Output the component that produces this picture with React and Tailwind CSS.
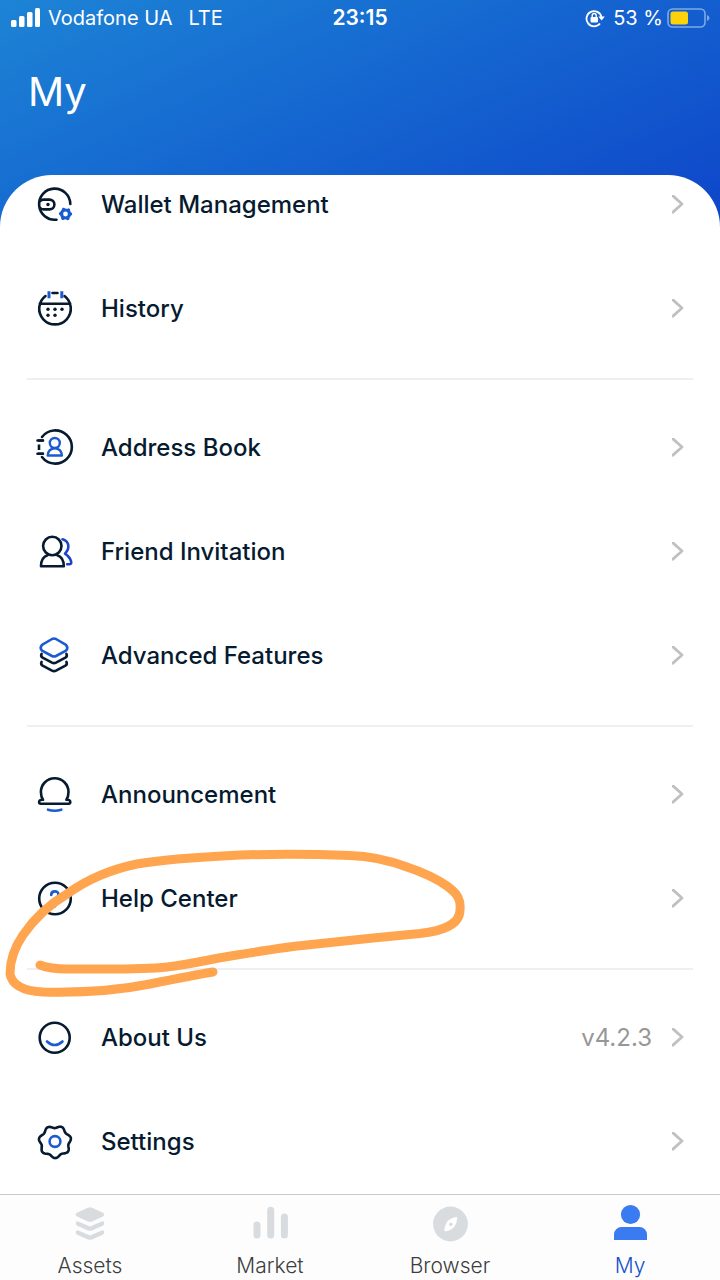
import React from 'react'

const BLUE = '#1b5bd0'
const NAVY = '#061a30'
const GREY = '#d9dcdf'

const Icon = ({ children }) => (
  <svg
    viewBox="0 0 40 40"
    fill="none"
    stroke={NAVY}
    strokeWidth="2.6"
    strokeLinecap="round"
    strokeLinejoin="round"
    aria-hidden="true"
    className="w-10 h-10 shrink-0"
  >
    {children}
  </svg>
)

const WalletIcon = () => (
  <Icon>
    <path d="M35.3 19A15.600 15.600 0 1 0 21.500 34.700" />
    <path d="M5.500 16C6 15 7 14.600 8.500 14.600h6a4.900 4.900 0 0 1 0 9.800h-6C7 24.400 6 24 5.500 23" />
    <circle cx="13" cy="19.500" r="1.700" fill={NAVY} stroke="none" />
    <circle cx="30.500" cy="29" r="4" stroke={BLUE} strokeWidth="3.200" />
    <circle cx="30.500" cy="29" r="5" stroke={BLUE} strokeWidth="3.400" strokeDasharray="0.01 5.226" />
  </Icon>
)

const HistoryIcon = () => (
  <Icon>
    <path d="M10.500 7A15.800 15.800 0 1 0 29.500 7M17.500 4h5M4.800 14.800h30.400" />
    <path d="M14 2.200v7M26.800 2.200v7" stroke={BLUE} strokeWidth="3" strokeLinecap="butt" />
    <g fill={NAVY} stroke="none">
      <circle cx="13" cy="20.300" r="1.700" />
      <circle cx="20" cy="20.300" r="1.700" />
      <circle cx="27" cy="20.300" r="1.700" />
      <circle cx="13" cy="26.300" r="1.700" />
      <circle cx="20" cy="26.300" r="1.700" />
    </g>
  </Icon>
)

const AddressIcon = () => (
  <Icon>
    <path d="M7 9A16.600 16.600 0 1 1 7 29" />
    <path d="M3 12.500h5.500M3 25.800h5.500M4 16.500v5.500" strokeLinecap="butt" />
    <path d="M2.500 12.500h5.500M2.500 25.800h5.500" />
    <g stroke={BLUE} strokeWidth="2.400">
      <circle cx="19.800" cy="15" r="5" />
      <path d="M12.700 27.500c0-4 2.800-7.300 7.100-7.300s7.100 3.300 7.100 7.300z" />
    </g>
  </Icon>
)

const FriendIcon = () => (
  <Icon>
    <circle cx="17.300" cy="14" r="9.200" />
    <path d="M12.500 23.200C8.500 24.500 6 28.500 6 34.300h22.800c0-5.800-2.500-9.800-6.500-11.100" />
    <path
      d="M27.500 7.300c6.500 1.700 8 9 2.500 14.300 4 2.700 5.300 4.700 6.200 8.200.4 2-.8 2.500-4 2.500"
      stroke="#1c43c8"
    />
  </Icon>
)

const FeaturesIcon = () => (
  <Icon>
    <path
      d="M17 3q2-1 4 0l10 5.800q2.600 2.900 0 5.800l-10 5.400q-2 1-4 0L7 14.600q-2.600-2.900 0-5.800z"
      stroke={BLUE}
    />
    <path d="M6.600 17.800q-1.200 2.500 1 3.800l9.400 5q2 1 4 0l9.400-5q2.200-1.300 1-3.800" />
    <path d="M6.600 25.800q-1.200 2.500 1 3.800l9.400 5q2 1 4 0l9.400-5q2.200-1.300 1-3.800" />
  </Icon>
)

const BellIcon = () => (
  <Icon>
    <path d="M8 24.800C6.500 22.500 5.900 20 5.900 17a13.800 13.800 0 0 1 27.600 0c0 3-.6 5.500-2.100 7.800 2.200-.2 3.900.4 3.900 2.200 0 1.200-.8 1.700-1.700 1.700H5.800c-.9 0-1.700-.5-1.700-1.700 0-1.800 1.700-2.400 3.900-2.200z" />
    <path d="M13 34.700q6.700 2 13.300 0" stroke={BLUE} />
  </Icon>
)

const HelpIcon = () => (
  <Icon>
    <circle cx="20" cy="19.500" r="15.800" />
    <path d="M16.200 16c0-4.800 7.200-4.800 7.200-.5 0 3-3.400 3.200-3.400 6.500M20 27v.2" stroke={BLUE} />
  </Icon>
)

const AboutIcon = () => (
  <Icon>
    <circle cx="19.700" cy="19.800" r="15" />
    <path d="M12 23.500q7.700 7 15.500 0" stroke={BLUE} />
  </Icon>
)

// seven-lobed gear outline
const gearPoints = Array.from({ length: 140 }, (_, i) => {
  const a = (i / 140) * Math.PI * 2
  const r = 15 + 1.3 * Math.cos(7 * (a + 2.04))
  return `${(20 + r * Math.cos(a)).toFixed(2)},${(19.8 + r * Math.sin(a)).toFixed(2)}`
}).join(' ')

const SettingsIcon = () => (
  <Icon>
    <polygon points={gearPoints} />
    <circle cx="20" cy="19.500" r="5.400" stroke={BLUE} />
  </Icon>
)

const groups = [
  [
    { label: 'Wallet Management', icon: WalletIcon },
    { label: 'History', icon: HistoryIcon },
  ],
  [
    { label: 'Address Book', icon: AddressIcon },
    { label: 'Friend Invitation', icon: FriendIcon },
    { label: 'Advanced Features', icon: FeaturesIcon },
  ],
  [
    { label: 'Announcement', icon: BellIcon },
    { label: 'Help Center', icon: HelpIcon, marked: true },
  ],
  [
    { label: 'About Us', icon: AboutIcon, value: 'v4.2.3' },
    { label: 'Settings', icon: SettingsIcon },
  ],
]

const tabs = [
  {
    label: 'Assets',
    icon: (
      <g fill={GREY} stroke="none">
        <path d="M18 3.800q2-1 4 0l11 5q2.600 1.800 0 3.800l-11 5q-2 .8-4 0l-11-5q-2.600-2 0-3.800z" />
        <path d="M5.800 19.500q0-3 3-1.800L20 22.400l11.200-4.700q3-1.200 3 1.800 0 1.500-1.500 2.200L22 26.400q-2 .8-4 0L7.300 21.700q-1.500-.7-1.500-2.200z" />
        <path d="M5.800 28.500q0-3 3-1.800L20 31.400l11.200-4.700q3-1.200 3 1.800 0 1.500-1.500 2.200L22 35.400q-2 .8-4 0L7.300 30.700q-1.500-.7-1.500-2.200z" />
      </g>
    ),
  },
  {
    label: 'Market',
    icon: <path d="M7 21v10M20.700 6.300V31M34.400 13v18" stroke={GREY} strokeWidth="7" />,
  },
  {
    label: 'Browser',
    icon: (
      <g stroke="none">
        <circle cx="20.500" cy="20" r="17.400" fill={GREY} />
        <path
          d="M25.500 13.200q2-.6 1.700 1.300-.4 4.500-2.700 8-3.500 4-8.500 4.800-2 .3-1.600-1.600.4-4.500 2.700-8 3.500-3.800 8.400-4.500z"
          fill="#fff"
        />
        <circle cx="20.800" cy="20.200" r="1.800" fill={GREY} />
      </g>
    ),
  },
  {
    label: 'My',
    active: true,
    icon: (
      <g fill="#3a7bf2" stroke="none">
        <circle cx="20.500" cy="10.500" r="9.600" />
        <path d="M4 36v-5.500a7.500 7.500 0 0 1 7.500-7.500h18a7.500 7.500 0 0 1 7.500 7.500V36z" />
      </g>
    ),
  },
]

const StatusBar = () => (
  <div className="grid grid-cols-3 items-center h-9 px-2.5 text-xl">
    <div className="flex items-center gap-2">
      <svg viewBox="0 0 30 20" className="w-[30px] h-5 shrink-0" fill="#fff" aria-hidden="true">
        <rect x="1" y="12" width="5.500" height="7" rx="1.500" />
        <rect x="9" y="8" width="5.500" height="11" rx="1.500" />
        <rect x="17" y="4" width="5.500" height="15" rx="1.500" />
        <rect x="25" y="0" width="5" height="19" rx="1.500" />
      </svg>
      <span className="whitespace-nowrap">Vodafone UA</span>
      <span className="pl-2">LTE</span>
    </div>
    <span className="text-center text-[21px] font-semibold">23:15</span>
    <div className="flex items-center justify-end gap-1">
      <svg viewBox="0 0 20 20" className="w-5 h-5 mr-1" fill="none" stroke="#fff" strokeWidth="1.800" aria-hidden="true">
        <path d="M15 15.500A7.600 7.600 0 1 1 16.500 9" />
        <path d="M13.300 8.500h6.500l-3.200 4z" fill="#fff" stroke="none" />
        <rect x="5.500" y="9" width="7.500" height="5.500" rx="1" fill="#fff" stroke="none" />
        <path d="M7.200 9.500V7.500a2 2 0 0 1 4 0v2" strokeWidth="1.400" />
      </svg>
      <span className="whitespace-nowrap">53 %</span>
      <svg viewBox="0 0 43 20" className="w-[43px] h-5" aria-hidden="true">
        <rect x="1" y="1" width="37" height="18" rx="4.500" fill="none" stroke="#7ea8ea" strokeWidth="1.600" />
        <rect x="3.500" y="3.500" width="17.500" height="13" rx="2.500" fill="#fdd20a" />
        <path d="M40 7q2.500 1 2.500 3T40 13z" fill="#7ea8ea" />
      </svg>
    </div>
  </div>
)

// hand-drawn loop around the highlighted row
const Marker = () => (
  <svg
    viewBox="0 0 480 160"
    className="absolute left-0 top-0 z-10 w-[480px] h-40 pointer-events-none"
    fill="none"
    stroke="#ffa550"
    strokeWidth="9"
    strokeLinecap="round"
    strokeLinejoin="round"
    aria-hidden="true"
  >
    <path d="M40 118C48 121 55 122 67 122C110 122 140 123 167 120C193 117 215 111 240 107.500C262 104 285 100 307 98L373 91L420 86.500C440 84 460 79 460 63C461 53 458 47 447 39C437 32 425 26 407 20C388 13 370 9 350 8.500C310 7 275 7 240 8C200 10 165 12 137 17C108 23 85 34 67 47C50 57 34 72 23 88C14 101 10 113 10 127C12 138 24 144 43 145C85 146 120 143 150 137C175 132 195 128 213 125" />
  </svg>
)

const MenuRow = ({ item }) => {
  const RowIcon = item.icon

  return (
    <li className="relative">
      <button type="button" className="w-full h-26 pl-[35px] pr-9 flex items-center text-left">
        <RowIcon />
        <span className="ml-[26px] flex-1 text-2xl font-medium text-[#061a30]">{item.label}</span>
        {item.value && <span className="mr-5 text-2xl text-[#979797]">{item.value}</span>}
        <svg viewBox="0 0 12 20" className="w-3 h-5" fill="none" stroke="#c0c0c0" strokeWidth="2.800" aria-hidden="true">
          <path d="M0 0l10 9-10 9" strokeLinejoin="round" />
        </svg>
      </button>
      {item.marked && <Marker />}
    </li>
  )
}

export default function App() {
  return (
    <div className="h-dvh flex flex-col bg-white font-['Inter','Noto_Sans',sans-serif]">
      <header className="shrink-0 pb-[111px] text-white bg-[linear-gradient(155deg,#1d84d5_0%,#1566d0_47%,#0e45c9_100%)]">
        <StatusBar />
        <h1 className="pl-7 pt-8 text-[40px] leading-12 font-normal">My</h1>
      </header>

      <main className="flex-1 min-h-0 -mt-[52px] rounded-t-[52px] bg-white overflow-y-auto [scrollbar-width:none]">
        <div className="-mt-[22px]">
          {groups.map((group, i) => (
            <React.Fragment key={i}>
              {i > 0 && <hr className="mx-[27px] mt-[17px] mb-4 border-t-2 border-[#eeeff0]" />}
              <ul>
                {group.map((item) => (
                  <MenuRow key={item.label} item={item} />
                ))}
              </ul>
            </React.Fragment>
          ))}
        </div>
      </main>

      <nav className="shrink-0 grid grid-cols-4 border-t border-[#c9c9cb] bg-[#fdfdfe]">
        {tabs.map((tab) => (
          <button
            key={tab.label}
            type="button"
            aria-current={tab.active ? 'page' : undefined}
            className={`flex flex-col items-center gap-2.5 pt-[9px] pb-0.5 text-[21px] leading-6 font-light ${
              tab.active ? 'text-[#1450cc]' : 'text-[#3c3d40]'
            }`}
          >
            <Icon>{tab.icon}</Icon>
            <span>{tab.label}</span>
          </button>
        ))}
      </nav>
    </div>
  )
}
